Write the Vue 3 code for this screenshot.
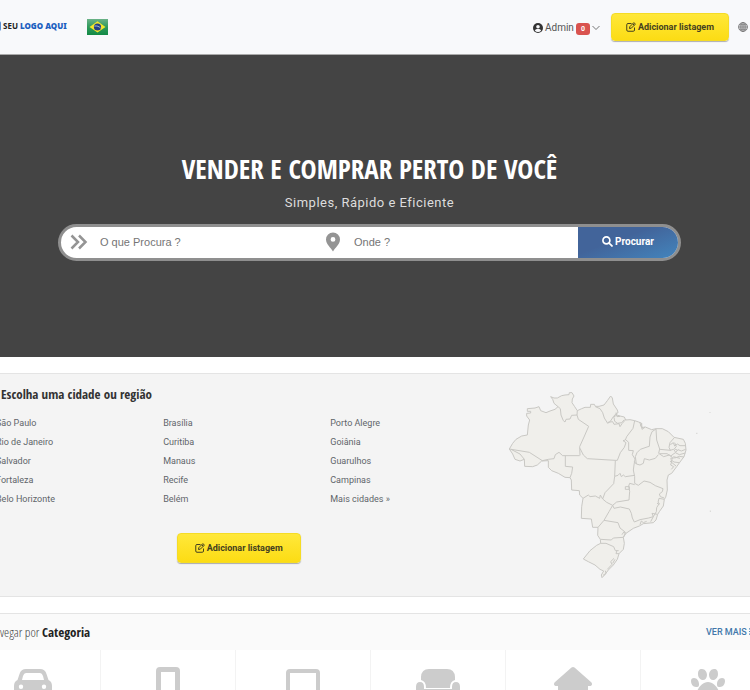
<template>
  <div class="page">
    <header class="header">
      <div class="header__inner">
        <a class="logo" href="#"><span class="logo__mark"></span>SEU <b>LOGO AQUI</b></a>
        <a class="flag" href="#" aria-label="Brasil">
          <svg viewBox="0 0 21 16" width="21" height="16">
            <defs>
              <linearGradient id="flagGreen" x1="0" y1="0" x2="0" y2="1">
                <stop offset="0" stop-color="#6bb287" />
                <stop offset="0.5" stop-color="#2f9a5c" />
                <stop offset="1" stop-color="#138a45" />
              </linearGradient>
            </defs>
            <rect width="21" height="16" fill="url(#flagGreen)" />
            <path d="M2.5 8 10.5 2.3 18.5 8l-8 5.5z" fill="#f4e62b" />
            <circle cx="10.5" cy="8" r="3.6" fill="#243f83" />
            <path d="M7.4 7.1c2.4-.5 4.7.3 6.2 2" fill="none" stroke="#c8d5e8" stroke-width="0.8" />
          </svg>
        </a>

        <nav class="header__nav">
          <a class="user" href="#">
            <svg class="user__icon" viewBox="0 0 20 20" width="10" height="10">
              <circle cx="10" cy="10" r="10" fill="#333" />
              <circle cx="10" cy="7.5" r="3.6" fill="#f8f9fb" />
              <path d="M3.8 15.4c1-2.4 3.4-3.2 6.2-3.2s5.2.8 6.2 3.2A8.3 8.3 0 0 1 10 18.2a8.3 8.3 0 0 1-6.2-2.8z" fill="#f8f9fb" />
            </svg>
            <span>Admin</span>
            <span class="badge">0</span>
            <svg class="user__caret" viewBox="0 0 8 6" width="8" height="6">
              <path d="M.5 1 4 4.5 7.5 1" fill="none" stroke="#666" stroke-width="0.9" />
            </svg>
          </a>
          <button class="btn-add" type="button">
            <svg viewBox="0 0 20 20" width="10" height="10"><path :d="editIcon" /></svg>
            Adicionar listagem
          </button>
          <a class="lang" href="#" aria-label="Idioma">
            <svg viewBox="0 0 20 20" width="10" height="10" fill="none" stroke="#777" stroke-width="1.6">
              <circle cx="10" cy="10" r="9" fill="#dcdddf" />
              <ellipse cx="10" cy="10" rx="4.3" ry="9" />
              <path d="M10 1v18M1 10h18M2.5 5.5h15M2.5 14.5h15" />
            </svg>
          </a>
        </nav>
      </div>
    </header>

    <section class="hero">
      <div class="hero__inner">
        <h1 class="hero__title">VENDER E COMPRAR PERTO DE VOCÊ</h1>
        <p class="hero__text">Simples, Rápido e Eficiente</p>
        <form class="search" @submit.prevent>
          <label class="search__field">
            <svg viewBox="0 0 18 16" width="18" height="16" fill="none" stroke="#949494" stroke-width="2.5">
              <path d="M1.5 1.5 8 8l-6.5 6.5M9 1.5 15.5 8 9 14.5" />
            </svg>
            <input v-model="keyword" type="text" placeholder="O que Procura ?" aria-label="O que Procura ?" />
          </label>
          <label class="search__field">
            <svg viewBox="0 0 18 20" width="18" height="20">
              <path fill="#949494" fill-rule="evenodd" d="M9 .5a7 7 0 0 0-7 7c0 4.8 5.2 8.6 7 12 1.8-3.4 7-7.2 7-12a7 7 0 0 0-7-7zM9 5a2.4 2.4 0 1 1 0 4.8A2.4 2.4 0 0 1 9 5z" />
            </svg>
            <input v-model="place" type="text" placeholder="Onde ?" aria-label="Onde ?" />
          </label>
          <button class="search__btn" type="submit">
            <svg viewBox="0 0 12 12" width="11" height="11" fill="none" stroke="#fff" stroke-width="1.8">
              <circle cx="4.8" cy="4.8" r="3.8" />
              <path d="m7.5 7.5 4 4" />
            </svg>
            Procurar
          </button>
        </form>
      </div>
    </section>

    <section class="panel">
      <div class="panel__inner">
        <div class="places">
          <h2 class="places__title">Escolha uma cidade ou região</h2>
          <ul class="places__list">
            <li v-for="city in cities" :key="city"><a href="#">{{ city }}</a></li>
          </ul>
          <button class="btn-add btn-add--large" type="button">
            <svg viewBox="0 0 20 20" width="10" height="10"><path :d="editIcon" /></svg>
            Adicionar listagem
          </button>
        </div>
        <svg class="map" viewBox="0 0 750 615" role="img" aria-label="Mapa do Brasil">
          <path class="map__land" :d="mapOutline" />
          <path v-for="(d, i) in mapBorders" :key="i" class="map__border" :d="d" />
          <path class="map__border" d="M630 96v2M589 160h3M631 392v3" />
        </svg>
      </div>
    </section>

    <section class="categories">
      <div class="categories__inner">
        <div class="categories__head">
          <h2>Navegar por <b>Categoria</b></h2>
          <a href="#">VER MAIS
            <svg viewBox="0 0 10 8" width="9" height="7">
              <path d="M0 1h10M0 4h10M0 7h10" stroke="#4278aa" stroke-width="1.4" />
            </svg>
          </a>
        </div>
        <div class="categories__grid">
          <a v-for="cat in categories" :key="cat.name" class="card" href="#" :aria-label="cat.name">
            <svg viewBox="0 0 48 40" width="48" height="40"><path :d="cat.icon" fill="#ccc" fill-rule="evenodd" /></svg>
          </a>
        </div>
      </div>
    </section>
  </div>
</template>

<script setup>
import { ref } from 'vue'

const keyword = ref('')
const place = ref('')

const cities = [
  'São Paulo', 'Brasília', 'Porto Alegre',
  'Rio de Janeiro', 'Curitiba', 'Goiânia',
  'Salvador', 'Manaus', 'Guarulhos',
  'Fortaleza', 'Recife', 'Campinas',
  'Belo Horizonte', 'Belém', 'Mais cidades »'
]

const editIcon = 'M11 3H4a2.5 2.5 0 0 0-2.5 2.5V16A2.5 2.5 0 0 0 4 18.5h10.5A2.5 2.5 0 0 0 17 16v-5M7 13l.6-3.6 8.2-8.2 3 3-8.2 8.2zM13.5 3.5l3 3'

const mapOutline =
  'M152 50 162 54 172 54 185 47 195 45 207 44 208 38 216 38 222 48 217 57 216 68 224 80 232 92 245 86 255 82 271 82 272 73 283 73 286 79 297 79 312 75 322 62 332 48 337 54 340 72 352 90 354 97 348 104 360 108 373 111 377 120 390 119 404 122 416 126 425 130 426 148 436 141 455 149 468 146 487 146 505 155 522 172 550 178 556 190 558 210 552 230 540 246 530 260 515 280 505 285 501 300 502 330 497 352 493 358 490 378 478 395 473 403 468 420 460 428 430 431 418 438 400 445 378 460 370 472 373 490 370 508 357 521 352 538 340 555 325 570 314 585 306 593 304 585 311 573 300 568 285 555 265 545 250 537 270 512 290 496 302 490 301 478 293 466 294 442 278 442 274 417 244 415 245 380 249 355 239 345 238 332 215 330 214 300 210 293 195 292 175 280 155 272 145 262 145 242 125 243 112 255 98 260 74 259 73 238 60 243 45 238 38 222 28 207 38 190 48 178 65 168 82 165 85 135 89 120 80 108 80 100 92 99 92 94 82 94 82 86 105 84 117 80 122 92 138 98 150 93 165 88 174 80 162 70 158 58Z'

const mapBorders = [
  // Norte
  'M174 80 181 86 183 105 190 122 195 126 198 118 210 117 215 106 231 105 232 92',
  'M231 105 235 118 266 139 252 171 239 200 240 226',
  'M240 205 250 225 262 236 346 241',
  'M286 80 300 86 308 98 313 114 323 130 331 124 340 110 352 97',
  'M323 127 338 125 342 133 357 131 360 140 366 131 375 121 378 118',
  'M340 112 350 105M342 112 344 124 353 130 365 128 373 119M348 98 351 110 360 109',
  'M28 207 88 217 127 242 145 238 162 236 166 224 177 217 188 227 239 227',
  'M33 208 60 222 73 238M196 227 196 259 218 261 215 280 210 293',
  // Nordeste
  'M404 122 399 145 380 170 376 180 369 182 378 188 373 202 361 218 352 241 346 241 344 289',
  'M378 180 386 187 386 211 400 212 397 224 405 237 402 255 400 270 404 290 404 310',
  'M403 245 409 252 406 230 411 218 421 208 441 201 448 199 450 171 456 155 468 147',
  'M409 252 420 255 430 250 433 236 448 240 466 235 475 224',
  'M468 147 470 180 479 207 476 220 491 230 508 225 517 232 514 248 512 255 521 260 514 268',
  'M522 174 510 188 507 202 511 211 480 208',
  'M511 194 520 188 524 198 532 192 540 197 556 197M510 211 521 208 527 217 534 209 544 213 557 208',
  'M524 188 529 200 523 206 533 211M479 221 501 221 512 228 526 218 538 224 556 219',
  'M511 235 528 233 538 229 552 231M512 239 522 246 537 248M510 243 528 258M520 230 540 235',
  'M425 130 422 138 429 143M419 126 425 143 435 141',
  // Centro-Oeste
  'M344 289 354 286 360 280 364 290 370 285 376 290 404 286M344 289 341 311 315 338 308 357 301 345 299 355 286 348 270 350 265 345 249 355',
  'M308 357 320 367 338 376 350 366 387 360 389 334 386 318 389 310 404 314M376 320H388V328H376Z',
  // Sudeste
  'M404 310 415 316 432 303 450 307 466 317 489 326 487 335 478 342 481 350 493 354',
  'M493 358 477 355 474 367 478 370 470 383 469 395 460 410 446 414 420 419 403 426 397 414 394 400 388 387 361 381 342 385 338 376',
  'M471 370 478 373M460 410 456 400 472 403M460 410 452 425',
  'M338 376 327 395 312 421 294 442',
  // Sul
  'M312 421 354 428 360 444 374 455 375 462 370 472 340 474 334 480 302 478',
  'M302 490 318 490 341 500 346 512 356 512M351 511 348 521 358 521',
  'M420 434 424 423 430 428 440 424M366 464 372 455 378 460M342 535 332 545 336 553 322 568M345 538 338 550M316 572 318 580 309 586'
]

const categories = [
  {
    name: 'Carros',
    icon: 'M17 4h14q5 0 6.5 5l2 6q3.5 1.5 3.5 6v14h-6v-5H11v5H5V21q0-4.5 3.5-6l2-6Q12 4 17 4zm0 4q-2 0-3 3l-1 4h22l-1-4q-1-3-3-3zM12 19.5a2.2 2.2 0 1 0 0 4.4 2.2 2.2 0 0 0 0-4.4zm23 0a2.2 2.2 0 1 0 0 4.4 2.2 2.2 0 0 0 0-4.4z'
  },
  { name: 'Celulares', icon: 'M16 2h16a4 4 0 0 1 4 4v32H12V6a4 4 0 0 1 4-4zm1 5v22h14V7z' },
  { name: 'Eletrônicos', icon: 'M11 4h26a4 4 0 0 1 4 4v30H7V8a4 4 0 0 1 4-4zm0 4v22h26V8z' },
  {
    name: 'Móveis',
    icon: 'M15 4h18q7.5 0 8 8v3q-5 1-5 8H12q0-7-5-8v-3q.5-8 8-8zM6 17q4 0 4 5v2h28v-2q0-5 4-5t4 5v14H2V22q0-5 4-5z'
  },
  { name: 'Imóveis', icon: 'M22.5 2.5q1.5-1 3 0l17 15q1.5 2.5-1 3.5H39v16H9V21H6.5q-2.5-1-1-3.5z' },
  {
    name: 'Animais',
    icon: 'M18 4c3 0 5 3 5 6s-2 5-4 5-5-2-5-6c0-3 1-5 4-5zm12 0c3 0 4 2 4 5 0 4-3 6-5 6s-4-2-4-5 2-6 5-6zM10 13c3 0 5 3 5 6s-1 3-3 3c-3 0-5-3-5-6 0-2 1-3 3-3zm28 0c2 0 3 1 3 3 0 3-2 6-5 6-2 0-3 0-3-3s2-6 5-6zM24 17c7 0 12 9 12 14 0 7-8 3-12 3s-12 4-12-3c0-5 5-14 12-14z'
  }
]
</script>

<style>
body {
  margin: 0;
  background: #fff;
}
</style>

<style scoped>
.page {
  height: 100vh;
  overflow: hidden;
  font-family: Roboto, sans-serif;
  color: #333;
}

a {
  color: inherit;
  text-decoration: none;
}

h1,
h2,
p,
ul {
  margin: 0;
  padding: 0;
}

/* The content column is a little wider than the window */
.header__inner,
.hero__inner,
.panel__inner,
.categories__inner {
  margin: 0 -26px 0 -34px;
}

.header {
  background: #f8f9fb;
  border-bottom: 1px solid #aaa;
}

.header__inner {
  display: flex;
  align-items: center;
  height: 54px;
  padding: 0 28px;
}

.logo {
  display: flex;
  gap: 2px;
  align-items: center;
  padding-bottom: 3px;
  font: 700 8px/12px "Noto Sans", sans-serif;
  color: #222;
}

.logo b {
  color: #1c5fc0;
}

.logo__mark {
  width: 7px;
  height: 10px;
  border-radius: 2px;
  background: #5a8fd4;
}

.flag {
  display: flex;
  margin-left: 20px;
}

.header__nav {
  display: flex;
  align-items: center;
  margin-left: auto;
}

.user {
  display: flex;
  align-items: center;
  gap: 2px;
  margin-right: 11px;
  padding-top: 1px;
  font-size: 10px;
  line-height: 14px;
  color: #555;
}

.badge {
  margin-top: 2px;
  padding: 0 5px;
  border-radius: 3px;
  background: #d9534f;
  color: #fff;
  font-size: 7px;
  font-weight: 700;
  line-height: 12px;
}

.btn-add {
  display: flex;
  align-items: center;
  justify-content: center;
  gap: 2px;
  height: 28px;
  padding: 0 14px;
  border: 1px solid #f5dc25;
  border-radius: 4px;
  background: linear-gradient(#ffe83a, #fcdc14);
  box-shadow: 0 1px 1px rgba(0, 0, 0, 0.3);
  color: #444020;
  font: 700 9px/14px Roboto, sans-serif;
  cursor: pointer;
}

.btn-add svg {
  fill: none;
  stroke: #444020;
  stroke-width: 2;
}

.btn-add--large {
  height: 30px;
  padding: 0 17px;
}

.lang {
  display: flex;
  margin-left: 9px;
}

.hero {
  background: #444;
}

.hero__inner {
  display: flex;
  flex-direction: column;
  align-items: center;
  padding: 95px 95px 96px 92px;
}

.hero__title {
  color: #fff;
  font: 700 27px/38px "Open Sans Condensed", "Liberation Sans Narrow", "Open Sans", sans-serif;
  white-space: nowrap;
}

.hero__text {
  margin-top: 5px;
  color: #ddd;
  font-size: 13px;
  line-height: 20px;
  letter-spacing: 0.5px;
}

.search {
  display: grid;
  grid-template-columns: 254fr 263fr 100px;
  align-self: stretch;
  height: 31px;
  margin-top: 11px;
  overflow: hidden;
  border: 3px solid #8f8f8f;
  border-radius: 19px;
  background: #fff;
}

.search__field {
  display: flex;
  align-items: center;
  min-width: 0;
  padding: 0 0 2px 9px;
}

.search__field input {
  flex: 1;
  min-width: 0;
  padding: 0 0 0 12px;
  border: 0;
  outline: 0;
  background: transparent;
  font: 11px/16px "Liberation Sans", sans-serif;
}

.search__field input::placeholder {
  color: #757575;
}

.search__btn {
  display: flex;
  align-items: center;
  justify-content: center;
  gap: 2px;
  padding: 0 0 2px;
  border: 0;
  background: linear-gradient(160deg, #42649a 40%, #4385bd);
  color: #fff;
  font: 700 10px/16px Roboto, sans-serif;
  cursor: pointer;
}

.panel {
  margin: 16px 0;
  border: solid #e4e4e4;
  border-width: 1px 0;
  background: #f4f4f4;
}

.panel__inner {
  display: grid;
  grid-template-columns: 13fr 7fr;
  padding: 6px 0 11px 14px;
}

.places {
  display: flex;
  flex-direction: column;
  align-items: center;
}

.places__title {
  align-self: stretch;
  padding: 4px 0 0 21px;
  font: 700 13px/20px "Open Sans Condensed", "Liberation Sans Narrow", "Open Sans", sans-serif;
}

.places__list {
  display: grid;
  grid-template-columns: repeat(3, 1fr);
  align-self: stretch;
  margin: 10px 0 24px;
  padding-left: 16px;
  list-style: none;
  color: #5f656a;
  font-size: 9px;
  line-height: 19px;
}

.map {
  width: 100%;
  max-width: 250px;
  margin-left: 3px;
}

.map__land,
.map__border {
  fill: none;
  stroke: #c9c8c4;
  stroke-width: 3;
  stroke-linejoin: round;
}

.map__land {
  fill: #f0efeb;
}

.categories {
  border-top: 1px solid #e4e4e4;
  background: #fafafa;
}

.categories__head {
  display: flex;
  align-items: center;
  justify-content: space-between;
  height: 36px;
  padding: 0 18px 0 22px;
}

.categories__head h2 {
  color: #444;
  font: 300 13px/20px "Open Sans Condensed Light", "Open Sans Condensed", "Liberation Sans Narrow", sans-serif;
}

.categories__head b {
  color: #222;
  font-family: "Open Sans Condensed", "Liberation Sans Narrow", sans-serif;
  font-weight: 700;
}

.categories__head a {
  color: #4278aa;
  font-size: 9px;
  font-weight: 500;
  line-height: 14px;
}

.categories__grid {
  display: grid;
  grid-template-columns: repeat(6, 1fr);
}

.card {
  display: flex;
  justify-content: center;
  padding: 15px 0;
  border-right: 1px solid #f3f3f3;
  background: #fff;
}
</style>
